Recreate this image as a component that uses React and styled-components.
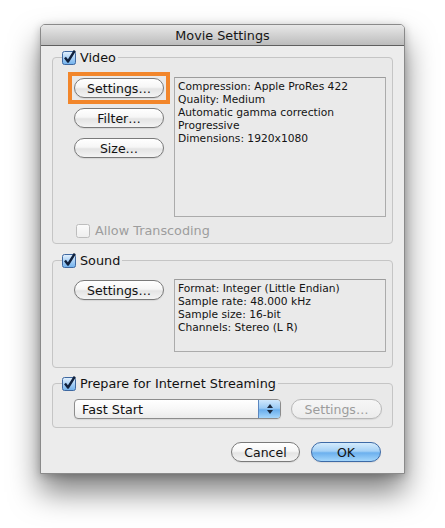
import React from 'react';
import styled, { createGlobalStyle } from 'styled-components';

const Global = createGlobalStyle`
  html, body { margin: 0; padding: 0; background: #ffffff; }
  body { font-family: "DejaVu Sans", "Lucida Grande", sans-serif; color: #111; }
  * { box-sizing: border-box; }
`;

const Page = styled.div`
  width: 445px;
  height: 528px;
  padding: 24px 0 0 40px;
  overflow: hidden;
`;

const Window = styled.div`
  width: 365px;
  background: #ececec;
  border: 1px solid #8a8a8a;
  border-radius: 5px 5px 0 0;
  box-shadow: 0 18px 30px rgba(0, 0, 0, 0.5), 0 2px 8px rgba(0, 0, 0, 0.22);
`;

const TitleBar = styled.div`
  height: 21px;
  border-bottom: 1px solid #5f5f5f;
  border-radius: 4px 4px 0 0;
  background: linear-gradient(#e8e8e8, #bcbcbc);
  display: flex;
  align-items: center;
  justify-content: center;
  font-size: 12.8px;
  color: #161616;
`;

const Body = styled.div`
  padding: 3px 11px 0 11px;
  display: flex;
  flex-direction: column;
`;

const Group = styled.fieldset`
  margin: ${(p) => p.$top || 0}px 0 0 0;
  padding: 0;
  min-width: 0;
  border: 1px solid #c5c5c5;
  border-radius: 4px;
  background: #e9e9e9;
`;

const Legend = styled.legend`
  margin-left: 9px;
  padding: 0 2px 0 0;
  height: 16px;
  display: flex;
  align-items: center;
  gap: 3px;
  font-size: 12.8px;
  color: #111;
`;

const Content = styled.div`
  padding: ${(p) => p.$pad};
  display: flex;
  flex-direction: column;
`;

const Row = styled.div`
  display: flex;
  align-items: flex-start;
  gap: 10px;
`;

const ButtonColumn = styled.div`
  width: 90px;
  margin-top: 1px;
  display: flex;
  flex-direction: column;
  gap: 10px;
`;

const Button = styled.button`
  width: ${(p) => p.$w}px;
  height: 20px;
  padding: 0;
  border-radius: 10px;
  border: 1px solid ${(p) => (p.disabled ? '#b8b8b8' : '#7a7a7a')};
  background: ${(p) =>
    p.disabled
      ? 'linear-gradient(#f6f6f6, #ececec)'
      : 'linear-gradient(#ffffff 0%, #f6f6f6 45%, #e4e4e4 55%, #f4f4f4 100%)'};
  box-shadow: 0 1px 1px rgba(0, 0, 0, 0.08);
  font-family: inherit;
  font-size: 12.5px;
  color: ${(p) => (p.disabled ? '#9c9c9c' : '#111')};
  display: flex;
  align-items: center;
  justify-content: center;
  flex-shrink: 0;
`;

const DefaultButton = styled(Button)`
  border-color: #3d6aa6;
  background: linear-gradient(#d4ebfc 0%, #a5d1f6 45%, #6cb0ee 55%, #a3d6fb 100%);
`;

const Highlight = styled.div`
  margin: -6px;
  padding: 2px;
  border: 4px solid #f2862b;
  width: fit-content;
`;

const InfoBox = styled.div`
  width: 212px;
  height: ${(p) => p.$h}px;
  border: 1px solid #ababab;
  border-top-color: #9c9c9c;
  background: #eaeaea;
  padding: 2px 3px;
  font-size: 10.7px;
  line-height: 13px;
  color: #141414;
`;

const InfoLine = styled.div`
  white-space: nowrap;
`;

const CheckRow = styled.div`
  margin: 6px 0 0 2px;
  height: 14px;
  display: flex;
  align-items: center;
  gap: 4px;
  font-size: 12.8px;
  color: ${(p) => (p.$disabled ? '#9d9d9d' : '#111')};
`;

const Popup = styled.div`
  width: 207px;
  height: 20px;
  border: 1px solid #8c8c8c;
  border-radius: 4px;
  background: linear-gradient(#ffffff 0%, #f7f7f7 50%, #ebebeb 100%);
  display: flex;
  overflow: hidden;
  box-shadow: 0 1px 1px rgba(0, 0, 0, 0.08);
`;

const PopupLabel = styled.div`
  flex: 1;
  padding-left: 7px;
  display: flex;
  align-items: center;
  font-size: 12.8px;
  color: #111;
`;

const Stepper = styled.div`
  width: 22px;
  border-left: 1px solid #5b86bf;
  background: linear-gradient(#cfe7fc 0%, #9ccbf4 45%, #6aaeec 55%, #a5d6fb 100%);
  display: flex;
  align-items: center;
  justify-content: center;
`;

const Footer = styled.div`
  padding: 14px 23px 11px 0;
  display: flex;
  justify-content: flex-end;
  gap: 11px;
`;

const CheckBox = ({ checked, disabled }) => (
  <svg width="15" height="15" viewBox="0 0 15 15" style={{ flexShrink: 0 }}>
    <defs>
      <linearGradient id="cbOn" x1="0" y1="0" x2="0" y2="1">
        <stop offset="0" stopColor="#e4f1fd" />
        <stop offset="0.5" stopColor="#a9d0f5" />
        <stop offset="1" stopColor="#6fb0ec" />
      </linearGradient>
      <linearGradient id="cbOff" x1="0" y1="0" x2="0" y2="1">
        <stop offset="0" stopColor="#fbfbfb" />
        <stop offset="1" stopColor="#eeeeee" />
      </linearGradient>
    </defs>
    <rect
      x="0.5"
      y="1.5"
      width="13"
      height="13"
      rx="2"
      fill={checked ? 'url(#cbOn)' : 'url(#cbOff)'}
      stroke={checked ? '#3f68a0' : disabled ? '#bdbdbd' : '#8a8a8a'}
    />
    {checked && (
      <path
        d="M3 7.5 L6 11.5 L12.8 0.6"
        fill="none"
        stroke="#10213d"
        strokeWidth="2.4"
        strokeLinejoin="round"
      />
    )}
  </svg>
);

const StepperArrows = () => (
  <svg width="8" height="12" viewBox="0 0 8 12">
    <path d="M4 1 L7 5 L1 5 Z" fill="#1b2a40" />
    <path d="M4 11 L7 7 L1 7 Z" fill="#1b2a40" />
  </svg>
);

export default function App() {
  return (
    <>
      <Global />
      <Page>
        <Window>
          <TitleBar>Movie Settings</TitleBar>
          <Body>
            <Group>
              <Legend>
                <CheckBox checked />
                Video
              </Legend>
              <Content $pad="12px 6px 6px 21px">
                <Row>
                  <ButtonColumn>
                    <Highlight>
                      <Button $w={90}>Settings…</Button>
                    </Highlight>
                    <Button $w={90}>Filter…</Button>
                    <Button $w={90}>Size…</Button>
                  </ButtonColumn>
                  <InfoBox $h={140}>
                    <InfoLine>Compression: Apple ProRes 422</InfoLine>
                    <InfoLine>Quality: Medium</InfoLine>
                    <InfoLine>Automatic gamma correction</InfoLine>
                    <InfoLine>Progressive</InfoLine>
                    <InfoLine>Dimensions: 1920x1080</InfoLine>
                  </InfoBox>
                </Row>
                <CheckRow $disabled>
                  <CheckBox disabled />
                  Allow Transcoding
                </CheckRow>
              </Content>
            </Group>

            <Group $top={8}>
              <Legend>
                <CheckBox checked />
                Sound
              </Legend>
              <Content $pad="11px 6px 15px 21px">
                <Row>
                  <ButtonColumn>
                    <Button $w={90}>Settings…</Button>
                  </ButtonColumn>
                  <InfoBox $h={73}>
                    <InfoLine>Format: Integer (Little Endian)</InfoLine>
                    <InfoLine>Sample rate: 48.000 kHz</InfoLine>
                    <InfoLine>Sample size: 16-bit</InfoLine>
                    <InfoLine>Channels: Stereo (L R)</InfoLine>
                  </InfoBox>
                </Row>
              </Content>
            </Group>

            <Group $top={7}>
              <Legend>
                <CheckBox checked />
                Prepare for Internet Streaming
              </Legend>
              <Content $pad="8px 6px 8px 21px">
                <Row>
                  <Popup>
                    <PopupLabel>Fast Start</PopupLabel>
                    <Stepper>
                      <StepperArrows />
                    </Stepper>
                  </Popup>
                  <Button $w={91} disabled>
                    Settings…
                  </Button>
                </Row>
              </Content>
            </Group>
          </Body>
          <Footer>
            <Button $w={69}>Cancel</Button>
            <DefaultButton $w={70}>OK</DefaultButton>
          </Footer>
        </Window>
      </Page>
    </>
  );
}
